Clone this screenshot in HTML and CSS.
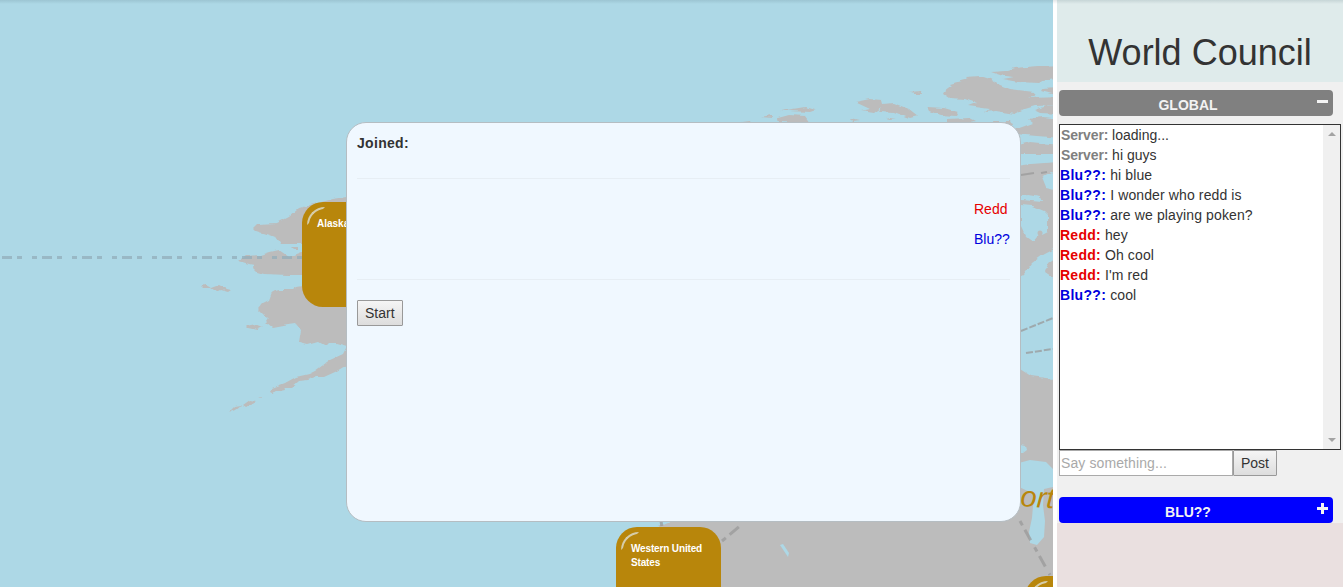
FILE: index.html
```html
<!DOCTYPE html>
<html lang="en">
<head>
<meta charset="utf-8">
<title>World Council</title>
<link rel="stylesheet" href="styles.css">
</head>
<body>
<main class="board">
  <svg class="map" viewBox="0 0 1053 587" width="1053" height="587" aria-hidden="true">
    <defs>
      <filter id="coast" x="0" y="0" width="1060" height="595" filterUnits="userSpaceOnUse">
        <feTurbulence type="fractalNoise" baseFrequency=".09 .22" numOctaves="2" seed="4"/>
        <feDisplacementMap in="SourceGraphic" scale="4" xChannelSelector="R" yChannelSelector="G"/>
      </filter>
    </defs>
    <g class="land" filter="url(#coast)">
      <path d="M253 228L257 224 277 223 289 217 299 208 310 205 333 199 360 195V358L347 365 335 372 324 377 316 377 308 380 299 381 291 388 282 388 272 394 272 388 285 383 296 377 309 374 315 371 330 360 343 354 347 346 336 343 330 343 327 346 318 341 307 344 299 342 301 330 296 324 289 325 273 328 266 322 268 319 258 309 263 303 269 300 272 292 279 290 292 290 296 287 302 286 302 275 288 275 264 274 257 272 253 268 254 265 249 264 239 261 246 256 261 255 270 252 279 250 289 257 302 252V244H281L277 238 269 235 256 231Z"/>
      <path d="M291 247L298 247 298 250 294 250ZM201 286L206 285 211 288 219 285 227 289 231 290 228 292 221 290 217 292 211 288 203 288ZM246 326L256 324 263 327 257 330 248 328ZM270 392L276 388 284 386 285 390 276 392 271 394ZM228 413L235 406 241 405 235 410ZM243 405L250 400 256 401 251 404 246 407ZM259 398L262 397 261 399Z"/>
      <path d="M944 92L952 86 950 84 968 79 966 77 980 76 990 79 1000 85 1010 89 1034 92 1036 96 1028 98 1060 97V105L1035 106 1025 109 1015 114 996 111 985 112 990 109 968 106 976 103 965 99 949 98 943 94Z"/>
      <path d="M991 72L1005 71 1014 68 1039 66 1060 65V77L1043 80 1038 83 1018 82 1002 79 1013 77 1000 75ZM1043 88L1060 87V96L1041 91ZM1034 110L1046 106 1060 105V114L1040 113Z"/>
      <path d="M855 102L870 99 882 100 883 104 893 103 909 109 918 116 910 118 894 112 879 111 881 108 874 113 861 111 870 109ZM908 92L921 91 922 94 914 94ZM927 107L944 108 958 112 956 116 940 115 929 111ZM886 118L896 118 890 119ZM780 111L805 107 816 110 810 112 788 111ZM761 117L771 115 772 118ZM778 118L789 115 805 116 810 123 779 122ZM742 122L750 121 751 123ZM850 119L859 121 852 122ZM947 119L970 118 976 121 960 124 947 122ZM992 121L1010 121 1012 125 995 125Z"/>
      <path d="M1014 130L1033 123 1028 119 1043 117 1060 119V138L1037 136 1014 134ZM1015 146L1030 142 1060 145V154H1015ZM1015 166L1031 164 1060 162V290H1015Z"/>
      <path d="M1015 366L1031 376 1060 380V595H640V535L668 523 690 510H1015Z"/>
    </g>
    <g class="water" filter="url(#coast)">
      <path d="M1042 177L1051 172 1060 174V190L1046 187ZM1021 196L1028 195 1040 197 1042 202 1021 200ZM1021 205L1032 206 1044 211 1048 215 1048 231 1038 236 1033 242 1026 237 1021 226ZM1032 263L1043 255 1060 246V255L1048 264 1045 272 1060 282V295H1015V279L1024 274Z"/>
      <path d="M1015 444L1025 446 1026 450 1022 453H1015Z"/>
    </g>
    <path class="water" d="M1015 464L1030 460 1046 462 1053 469V487L1044 489 1043 505 1045 521 1044 537 1037 545 1030 543 1029 532 1032 518 1034 494 1015 485ZM780 545L783 544 789 553 788 557Z"/>
    <circle class="islet" cx="1040" cy="233" r="2.500"/>
    <g class="routes">
      <path class="strait" d="M-8 257.500H302"/>
      <path d="M1021 175L1034 173M1041 173L1047 172"/>
      <path class="thin" d="M1021 331L1053 318M1026 353L1053 349"/>
      <path class="wide" d="M1020 521L1050 575M722 541L741 525M661 521L662 527"/>
    </g>
    <text class="region" x="1020" y="506" transform="rotate(4 1020 507)">ort</text>
  </svg>
  <div class="territory alaska">Alaska</div>
  <div class="territory western">Western United States</div>
  <div class="territory eastern"></div>
  <section class="lobby">
    <strong class="lobby-title">Joined:</strong>
    <hr class="rule">
    <ul class="players">
      <li class="red">Redd</li>
      <li class="blue">Blu??</li>
    </ul>
    <hr class="rule">
    <button class="button">Start</button>
  </section>
</main>
<aside class="council">
  <h1 class="title">World Council</h1>
  <div class="chat">
    <div class="channel global"><span>GLOBAL</span><i class="sign minus"></i></div>
    <div class="log">
      <div class="messages">
        <p><b class="server">Server:</b> loading...</p>
        <p><b class="server">Server:</b> hi guys</p>
        <p><b class="blue">Blu??:</b> hi blue</p>
        <p><b class="blue">Blu??:</b> I wonder who redd is</p>
        <p><b class="blue">Blu??:</b> are we playing poken?</p>
        <p><b class="red">Redd:</b> hey</p>
        <p><b class="red">Redd:</b> Oh cool</p>
        <p><b class="red">Redd:</b> I'm red</p>
        <p><b class="blue">Blu??:</b> cool</p>
      </div>
      <div class="scrollbar"><i class="up"></i><i class="down"></i></div>
    </div>
    <form class="composer">
      <input class="entry" type="text" placeholder="Say something...">
      <button class="button" type="button">Post</button>
    </form>
    <div class="channel private"><span>BLU??</span><i class="sign plus"></i></div>
  </div>
</aside>
</body>
</html>
```
FILE: styles.css
```css
* { box-sizing: border-box; }

body {
  display: flex;
  width: 1343px;
  height: 587px;
  margin: 0;
  overflow: hidden;
  background: #fff;
  color: #333;
  font: 14px/20px "Liberation Sans", Arial, sans-serif;
}

body::before {
  content: "";
  position: absolute;
  z-index: 5;
  width: 100%;
  height: 4px;
  background: linear-gradient(rgba(60, 90, 100, .15), transparent);
}

.board {
  position: relative;
  width: 1053px;
  height: 587px;
  margin-right: 4px;
  overflow: hidden;
  background: #add8e6;
}

.map { display: block; }
#coast { color-interpolation-filters: sRGB; }
.land, .islet { fill: #bcbcbc; }
.water { fill: #add8e6; }
.routes { fill: none; stroke: #999; stroke-width: 2; stroke-opacity: .75; }
.strait { stroke: #93aeb9; stroke-width: 3; stroke-dasharray: 5 5 10 5 5 10; }
.thin { stroke-dasharray: 7 2; }
.wide { stroke-width: 3; stroke-dasharray: 5 5 12 8; }
.region { fill: #b8860b; font: italic 29px "Liberation Sans", Arial, sans-serif; }

.territory {
  position: absolute;
  width: 105px;
  height: 105px;
  padding: 15px 13px 15px 15px;
  border-radius: 21px;
  background: #b8860b;
  color: #fff;
  font-size: 10px;
  font-weight: bold;
  line-height: 14px;
}

.territory::before {
  content: "";
  position: absolute;
  top: 5px;
  left: 5px;
  width: 32px;
  height: 32px;
  border: 2px solid transparent;
  border-top-color: #d6cda9;
  border-left-color: #d6cda9;
  border-radius: 18px;
  clip-path: polygon(0 0, 18px 0, 0 18px);
}

.alaska { left: 302px; top: 202px; }
.western { left: 616px; top: 527px; letter-spacing: -.15px; }
.eastern { left: 1025px; top: 576px; }

.lobby {
  position: absolute;
  left: 346px;
  top: 122px;
  width: 675px;
  height: 400px;
  padding: 10px;
  border: 1px solid #b5bdc2;
  border-radius: 20px;
  background: #f0f8ff;
}

.lobby-title { display: block; height: 20px; letter-spacing: .3px; }

.rule {
  height: 1px;
  margin: 25px 0 20px;
  border: 0;
  background: #e7eef4;
}

.players {
  display: flex;
  flex-direction: column;
  width: 36px;
  height: 65px;
  margin: -5px 0 0 auto;
  padding: 0;
  list-style: none;
  line-height: 30px;
}

.players + .rule { margin: 20px 0; }
.red { color: #e60000; }
.blue { color: #00d; }
.server { color: gray; }

.button {
  height: 26px;
  padding: 0 7px;
  border: 1px solid #999;
  border-radius: 1px;
  background: linear-gradient(#f5f5f5, #ddd);
  color: #333;
  font: 14px/20px "Liberation Sans", Arial, sans-serif;
}

.council { width: 286px; height: 587px; background: #eae0e0; }

.title {
  height: 82px;
  margin: 0;
  padding-top: 33px;
  background: #dfebeb;
  font-size: 36px;
  font-weight: normal;
  line-height: 40px;
  text-align: center;
}

.chat { height: 441px; padding: 8px 2px 0; background: #f0f0f0; }

.channel {
  position: relative;
  width: 274px;
  height: 26px;
  padding-right: 16px;
  border-radius: 4px;
  color: #f3f3f3;
  font-weight: bold;
  line-height: 30px;
  text-align: center;
}

.global { background: gray; }
.private { margin-top: 21px; background: #00f; }

.sign {
  position: absolute;
  top: 10px;
  right: 5px;
  width: 11px;
  height: 3px;
  background: #f3f3f3;
}

.plus::after {
  content: "";
  position: absolute;
  left: 4px;
  top: -4px;
  width: 3px;
  height: 11px;
  background: #f3f3f3;
}

.log {
  display: flex;
  width: 282px;
  height: 326px;
  margin-top: 8px;
  border: 1px solid #333;
  background: #fff;
}

.messages { flex: 1; }
.messages p { margin: 0; letter-spacing: .12px; }
.messages .blue { letter-spacing: .3px; }
.messages .red { letter-spacing: .25px; }
.messages .server { letter-spacing: -.15px; }
.messages p:nth-child(-n+2) { padding-left: 1px; letter-spacing: 0; }

.scrollbar {
  display: flex;
  flex-direction: column;
  align-items: center;
  justify-content: space-between;
  width: 17px;
  padding: 7px 0;
  background: #f0f0f0;
}

.up, .down { border: 4px solid transparent; }
.up { border-top: 0; border-bottom-color: #a3a3a3; }
.down { border-bottom: 0; border-top-color: #a3a3a3; }

.composer { display: flex; }

.entry {
  width: 174px;
  height: 26px;
  padding: 1px;
  border: 1px solid #aaa;
  font: 14px/20px "Liberation Sans", Arial, sans-serif;
}

.entry::placeholder { color: #a9a9a9; opacity: 1; letter-spacing: .1px; }
```
